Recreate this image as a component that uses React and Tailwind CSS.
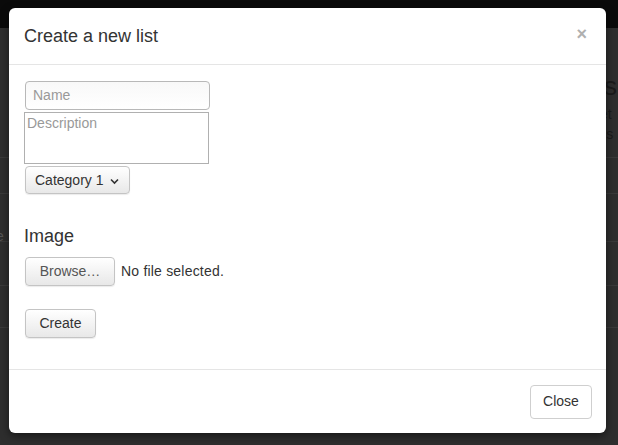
import React from 'react';

export default function App() {
  const btn =
    'border border-[#c4c4c4] rounded-[4px] bg-gradient-to-b from-[#ffffff] to-[#e8e8e8] text-[#333] text-[14px] shadow-[0_1px_1px_rgba(0,0,0,0.08)]';

  return (
    <div
      className="relative w-[618px] h-[445px] overflow-hidden bg-[#2e2e2e]"
      style={{ fontFamily: '"Liberation Sans", Arial, sans-serif' }}
    >
      {/* dimmed page behind the modal */}
      <div className="h-[28px] bg-[#0a0a0a]" />
      <div className="flex flex-col">
        <div className="h-[130px] border-b border-[#3a3a3a]" />
        <div className="h-[36px] border-b border-[#3a3a3a]" />
        <div className="h-[48px] border-b border-[#3a3a3a] text-[#555] text-[14px] pt-[32px] -ml-[4px]">e</div>
        <div className="h-[44px] border-b border-[#3a3a3a]" />
        <div className="h-[42px] border-b border-[#3a3a3a]" />
      </div>
      <div className="absolute left-[604px] top-[68px] w-[20px] text-[#1a1a1a]">
        <div className="text-[26px] leading-[36px]">s</div>
        <div className="text-[14px] leading-[20px] -ml-[4px]">et</div>
        <div className="text-[14px] leading-[20px] -ml-[4px]">lis</div>
      </div>

      {/* modal */}
      <div className="absolute left-[9px] top-[8px] w-[597px] h-[425px] bg-white rounded-[6px] flex flex-col shadow-[0_3px_9px_rgba(0,0,0,0.5)]">
        <div className="h-[57px] px-[15px] flex items-center justify-between border-b border-[#e5e5e5]">
          <h3 className="text-[18px] text-[#333] pt-[1px]">Create a new list</h3>
          <span className="text-[#b0b0b0] text-[18px] font-bold leading-none mr-[4px] -mt-[4px]">×</span>
        </div>

        <div className="flex-1 px-[15px] pt-[16px] flex flex-col items-start">
          <div className="w-[185px] h-[29px] rounded-[4px] border border-[#b8b8b8] bg-gradient-to-b from-[#f8f8f8] to-[#ffffff] flex items-center px-[7px] text-[14px] text-[#999] ml-[1px]">
            Name
          </div>
          <div className="w-[185px] h-[52px] mt-[2px] border border-[#b0b0b0] px-[2px] pt-[1px] text-[14px] text-[#999] leading-[18px]">
            Description
          </div>
          <div className={`${btn} mt-[2px] ml-[1px] w-[105px] h-[28px] flex items-center pl-[9px] gap-[6px]`}>
            <span>Category 1</span>
            <svg width="11" height="10" viewBox="0 0 11 10" className="mt-[1px]">
              <path d="M2 3.5 L5.5 7 L9 3.5" fill="none" stroke="#333" strokeWidth="1.6" />
            </svg>
          </div>

          <div className="mt-[29px] text-[18px] text-[#333] leading-[26px]">Image</div>
          <div className="mt-[8px] flex items-center ml-[1px]">
            <div className={`${btn} w-[90px] h-[29px] flex items-center justify-center text-[#555]`}>Browse…</div>
            <span className="ml-[6px] text-[14px] text-[#333] tracking-[0.2px]">No file selected.</span>
          </div>
          <div className={`${btn} mt-[23px] ml-[1px] w-[71px] h-[29px] flex items-center justify-center`}>Create</div>
        </div>

        <div className="h-[64px] border-t border-[#e5e5e5] flex items-center justify-end px-[14px]">
          <div className="w-[62px] h-[34px] rounded-[4px] border border-[#cfcfcf] bg-white flex items-center justify-center text-[14px] text-[#333]">
            Close
          </div>
        </div>
      </div>
    </div>
  );
}
